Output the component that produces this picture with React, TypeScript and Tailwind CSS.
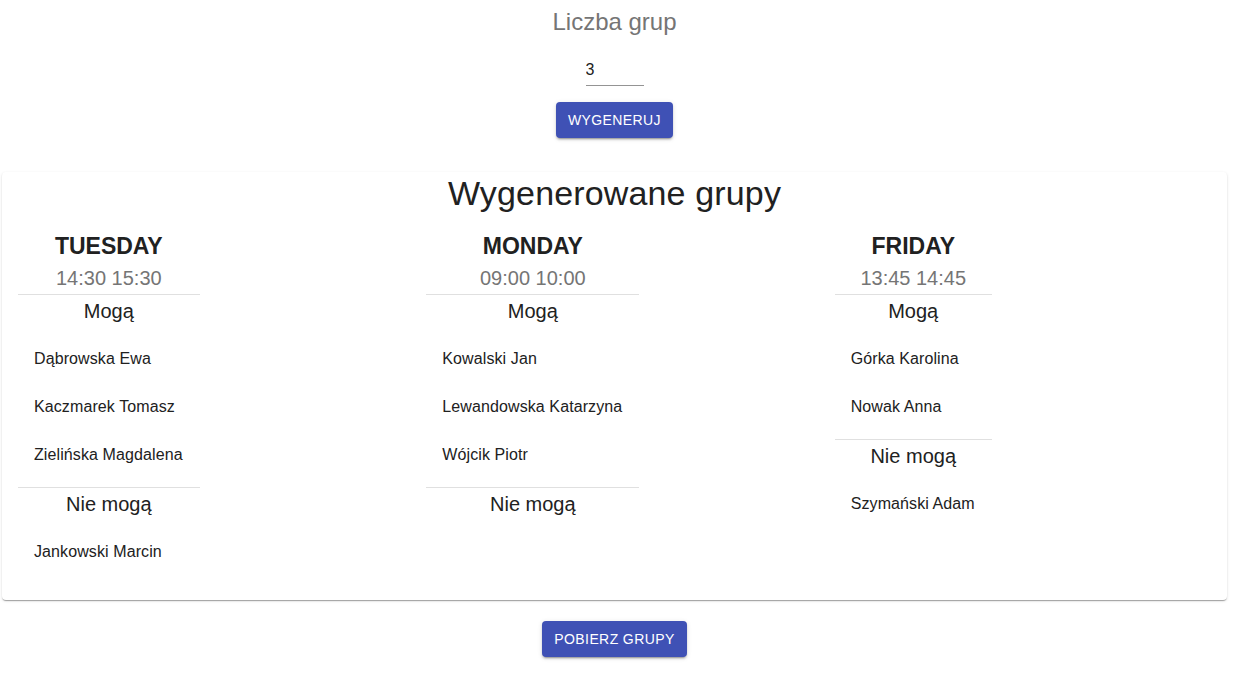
import React from "react";

type Group = { day: string; time: string; can: string[]; cannot: string[] };

const groups: Group[] = [
  {
    day: "TUESDAY",
    time: "14:30 15:30",
    can: ["Dąbrowska Ewa", "Kaczmarek Tomasz", "Zielińska Magdalena"],
    cannot: ["Jankowski Marcin"],
  },
  {
    day: "MONDAY",
    time: "09:00 10:00",
    can: ["Kowalski Jan", "Lewandowska Katarzyna", "Wójcik Piotr"],
    cannot: [],
  },
  {
    day: "FRIDAY",
    time: "13:45 14:45",
    can: ["Górka Karolina", "Nowak Anna"],
    cannot: ["Szymański Adam"],
  },
];

function NameList({ names }: { names: string[] }) {
  return (
    <ul className="py-2">
      {names.map((n) => (
        <li key={n} className="pl-4 pr-[17px] py-2 whitespace-nowrap">
          <div className="my-1 text-[16px] leading-[24px] tracking-[0.1px] text-[#212121]">{n}</div>
        </li>
      ))}
    </ul>
  );
}

function Column({ g }: { g: Group }) {
  return (
    <div className="pl-4 pt-4 pb-4">
      <div className="inline-flex flex-col">
        <div className="text-center text-[23px] font-bold leading-8 text-[#212121]">{g.day}</div>
        <div className="text-center text-[20px] leading-8 text-[#757575]">{g.time}</div>
        <div className="h-px bg-[#e0e0e0]" />
        <div className="text-center text-[20px] leading-8 text-[#212121]">Mogą</div>
        <NameList names={g.can} />
        <div className="h-px bg-[#e0e0e0]" />
        <div className="text-center text-[20px] leading-8 text-[#212121]">Nie mogą</div>
        <NameList names={g.cannot} />
      </div>
    </div>
  );
}

const btn =
  "h-9 px-3 rounded bg-[#3f51b5] text-white text-[14px] uppercase tracking-[0.4px] shadow-[0px_3px_1px_-2px_rgba(0,0,0,0.2),0px_2px_2px_0px_rgba(0,0,0,0.14),0px_1px_5px_0px_rgba(0,0,0,0.12)] flex items-center justify-center";

export default function App() {
  return (
    <div className="min-h-screen bg-white font-['Liberation_Sans',Arial,sans-serif]">
      <div className="w-[1229px] flex flex-col items-center pt-[6px] px-[2px]">
        <div className="text-[24px] leading-8 text-[#757575]">Liczba grup</div>
        <div className="mt-4 w-[58px] border-b border-[#949494]">
          <input
            defaultValue="3"
            className="block w-full bg-transparent pt-[6px] pb-[6px] text-[16px] leading-[19px] h-[31px] text-[#212121] outline-none"
          />
        </div>
        <button className={"mt-4 " + btn}>Wygeneruj</button>

        <div className="mt-[34px] w-full rounded bg-white shadow-[0px_2px_1px_-1px_rgba(0,0,0,0.2),0px_1px_1px_0px_rgba(0,0,0,0.14),0px_1px_3px_0px_rgba(0,0,0,0.12)]">
          <div className="text-center text-[34px] leading-[42px] tracking-[0.15px] text-[#212121]">Wygenerowane grupy</div>
          <div className="grid grid-cols-3">
            {groups.map((g) => (
              <Column key={g.day} g={g} />
            ))}
          </div>
        </div>

        <button className={"mt-[21px] " + btn}>Pobierz grupy</button>
      </div>
    </div>
  );
}
